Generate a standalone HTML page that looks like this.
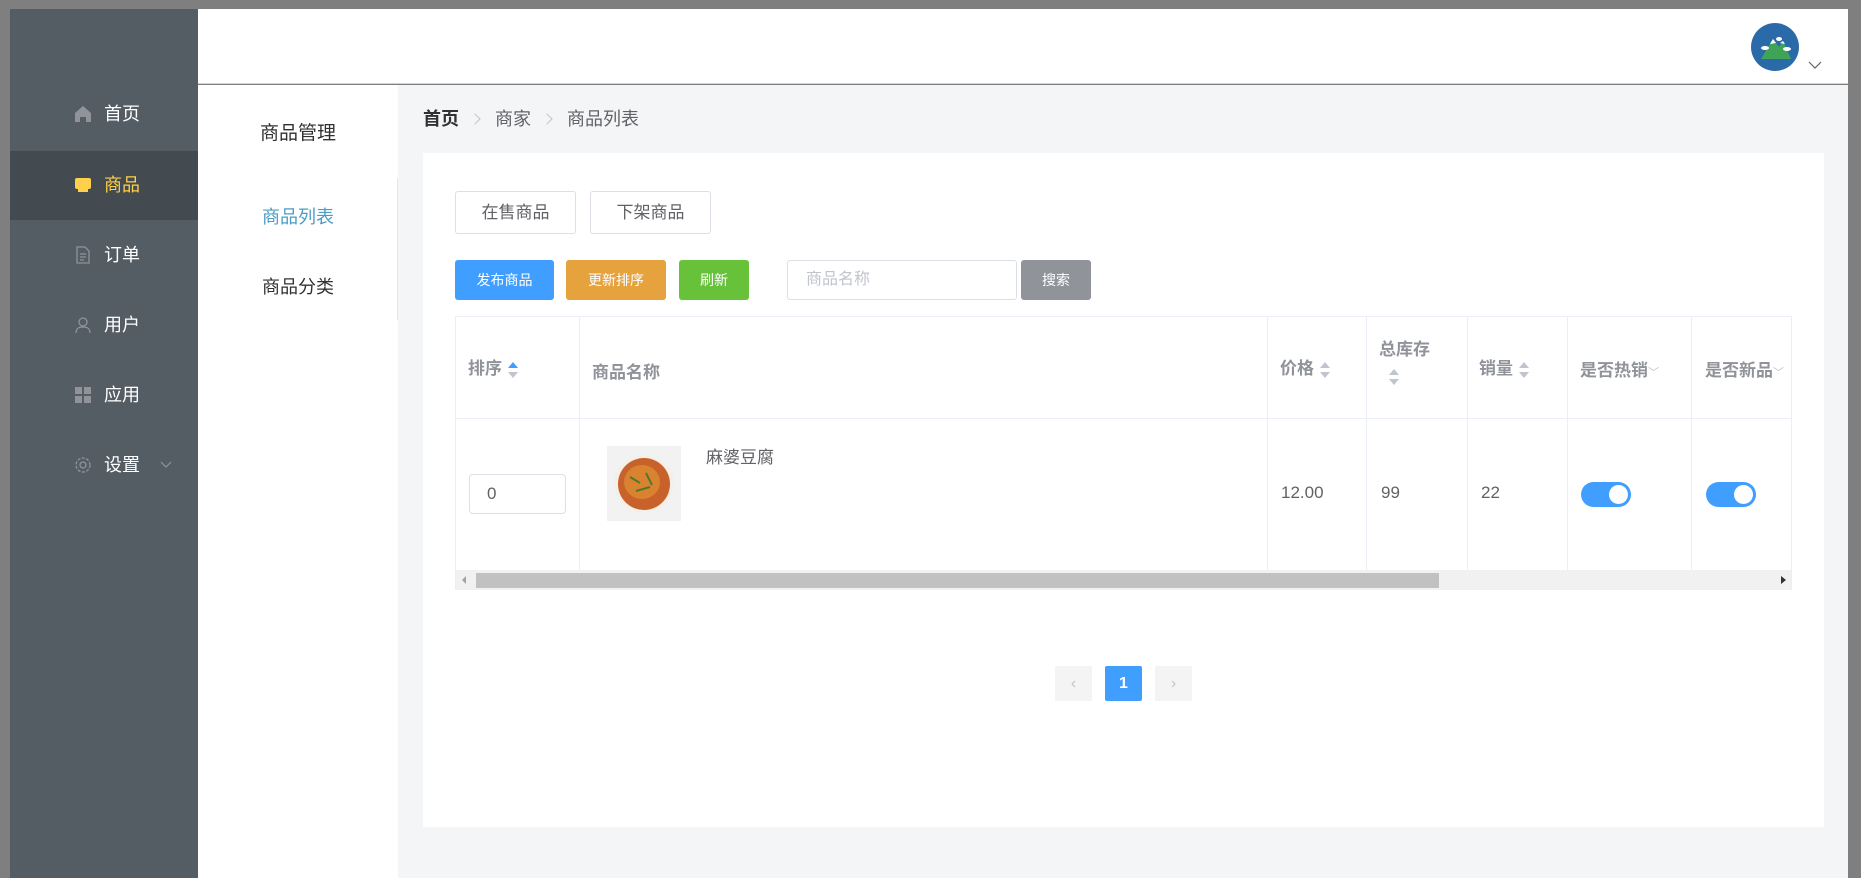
<!DOCTYPE html>
<html><head><meta charset="utf-8"><style>
*{margin:0;padding:0;box-sizing:border-box}
body{width:1861px;height:878px;background:#7f7f7f;position:relative;overflow:hidden;font-family:"Liberation Sans","Noto Sans CJK SC",sans-serif;color:#303133}
.a{position:absolute}
.side{left:10px;top:9px;width:188px;height:869px;background:#545c64}
.mi{position:absolute;left:0;width:188px;height:69px;color:#fff;font-size:18px;line-height:69px}
.mi span.t{position:absolute;left:94px}
.mi .ic{position:absolute;left:64px;top:25px;width:18px;height:18px}
.btn{position:absolute;color:#fff;font-size:14px;text-align:center;border-radius:3px}
.th{position:absolute;font-size:17px;font-weight:bold;color:#909399}
.vl{position:absolute;top:316px;height:254px;width:1px;background:#ebeef5}
.sort{display:inline-block;vertical-align:middle;margin-left:6px;width:10px;height:18px;position:relative}
.sort:before{content:"";position:absolute;left:0;top:1px;border:5px solid transparent;border-bottom:6px solid #c0c4cc;border-top:0}
.sort:after{content:"";position:absolute;left:0;top:11px;border:5px solid transparent;border-top:6px solid #c0c4cc;border-bottom:0}
.sort.up:before{border-bottom-color:#409eff}
.sw{position:absolute;top:482px;width:50px;height:25px;border-radius:13px;background:#409eff}
.sw:after{content:"";position:absolute;right:3px;top:3px;width:19px;height:19px;border-radius:50%;background:#fff}
.td{position:absolute;top:483px;font-size:17px;color:#606266}
.sep{display:inline-block;width:8px;height:8px;border-top:1px solid #c0c4cc;border-right:1px solid #c0c4cc;transform:rotate(45deg);margin:0 16px 2px 12px}
</style></head><body>
<div class="a side">
 <div class="mi" style="top:71px"><svg class="ic" viewBox="0 0 18 18"><path d="M1 8L9 1l8 7v9h-5v-5H6v5H1z" fill="#909399"/></svg><span class="t">首页</span></div>
 <div class="mi" style="top:142px;background:#434a50;color:#ffd04b"><svg class="ic" viewBox="0 0 18 18"><rect x="1" y="2" width="16" height="11" rx="2" fill="#ffd04b"/><rect x="4" y="13" width="10" height="3" fill="#ffd04b"/></svg><span class="t">商品</span></div>
 <div class="mi" style="top:212px"><svg class="ic" viewBox="0 0 18 18"><path d="M3 1h8l4 4v12H3z M6 8h6M6 11h6M6 14h4" fill="none" stroke="#909399" stroke-width="1.3"/></svg><span class="t">订单</span></div>
 <div class="mi" style="top:282px"><svg class="ic" viewBox="0 0 18 18"><circle cx="9" cy="6" r="4" fill="none" stroke="#909399" stroke-width="1.3"/><path d="M2 17c0-5 3-6 7-6s7 1 7 6" fill="none" stroke="#909399" stroke-width="1.3"/></svg><span class="t">用户</span></div>
 <div class="mi" style="top:352px"><svg class="ic" viewBox="0 0 18 18"><rect x="1" y="1" width="7" height="7" fill="#909399"/><rect x="10" y="1" width="7" height="7" fill="#909399"/><rect x="1" y="10" width="7" height="7" fill="#909399"/><rect x="10" y="10" width="7" height="7" fill="#909399"/></svg><span class="t">应用</span></div>
 <div class="mi" style="top:422px"><svg class="ic" viewBox="0 0 18 18"><circle cx="9" cy="9" r="7" fill="none" stroke="#909399" stroke-width="1.3" stroke-dasharray="3 1.5"/><circle cx="9" cy="9" r="3" fill="none" stroke="#909399" stroke-width="1.3"/></svg><span class="t">设置</span><svg class="a" style="left:150px;top:30px" width="12" height="8" viewBox="0 0 12 8"><path d="M1 1l5 5 5-5" fill="none" stroke="#909399" stroke-width="1.2"/></svg></div>
</div>
<div class="a" style="left:198px;top:9px;width:1650px;height:75px;background:#fff;border-bottom:1px solid #d0d3d8"></div>
<svg class="a" style="left:1751px;top:23px" width="48" height="48" viewBox="0 0 48 48"><circle cx="24" cy="24" r="24" fill="#2b6aa8"/><path d="M10 36L22 16l6 8 4-6 8 18z" fill="#3fa457"/><path d="M19 21l3-5 3 4z M29 20l3-2 2 3z" fill="#fff"/><ellipse cx="14" cy="25" rx="4" ry="2" fill="#fff"/><ellipse cx="36" cy="26" rx="4" ry="2" fill="#fff"/><ellipse cx="28" cy="16" rx="3" ry="2" fill="#fff"/></svg>
<svg class="a" style="left:1808px;top:61px" width="14" height="9" viewBox="0 0 14 9"><path d="M1 1l6 6 6-6" fill="none" stroke="#606266" stroke-width="1.2"/></svg>
<div class="a" style="left:198px;top:85px;width:200px;height:793px;background:#fff"></div>
<div class="a" style="left:397px;top:178px;width:1px;height:142px;background:#e6e6e6"></div>
<div class="a" style="left:198px;top:118px;width:200px;text-align:center;font-size:19px;color:#303133">商品管理</div>
<div class="a" style="left:198px;top:203px;width:200px;text-align:center;font-size:18px;color:#4a9cc6">商品列表</div>
<div class="a" style="left:198px;top:273px;width:200px;text-align:center;font-size:18px;color:#303133">商品分类</div>
<div class="a" style="left:398px;top:85px;width:1450px;height:793px;background:#f4f5f7"></div>
<div class="a" style="left:1848px;top:0;width:13px;height:878px;background:#7f7f7f"></div>
<div class="a" style="left:0;top:0;width:1861px;height:9px;background:#7f7f7f"></div>
<div class="a" style="left:423px;top:105px;font-size:18px;color:#606266"><b style="color:#303133">首页</b><span class="sep"></span>商家<span class="sep"></span>商品列表</div>
<div class="a" style="left:423px;top:153px;width:1401px;height:674px;background:#fff"></div>
<div class="btn" style="left:455px;top:191px;width:121px;height:43px;line-height:41px;border:1px solid #dcdfe6;color:#606266;font-size:17px;background:#fff">在售商品</div>
<div class="btn" style="left:590px;top:191px;width:121px;height:43px;line-height:41px;border:1px solid #dcdfe6;color:#606266;font-size:17px;background:#fff">下架商品</div>
<div class="btn" style="left:455px;top:260px;width:99px;height:40px;line-height:40px;background:#409eff">发布商品</div>
<div class="btn" style="left:566px;top:260px;width:100px;height:40px;line-height:40px;background:#e6a23c">更新排序</div>
<div class="btn" style="left:679px;top:260px;width:70px;height:40px;line-height:40px;background:#67c23a">刷新</div>
<div class="a" style="left:787px;top:260px;width:230px;height:40px;border:1px solid #dcdfe6;border-radius:3px;font-size:16px;color:#c0c4cc;line-height:38px;padding-left:18px">商品名称</div>
<div class="btn" style="left:1021px;top:260px;width:70px;height:40px;line-height:40px;background:#909399">搜索</div>
<div class="a" style="left:455px;top:316px;width:1337px;height:274px;border:1px solid #ebeef5"></div>
<div class="a" style="left:455px;top:418px;width:1337px;height:1px;background:#ebeef5"></div>
<div class="vl" style="left:579px"></div><div class="vl" style="left:1267px"></div><div class="vl" style="left:1366px"></div><div class="vl" style="left:1467px"></div><div class="vl" style="left:1567px"></div><div class="vl" style="left:1691px"></div>
<div class="th" style="left:468px;top:354px">排序<span class="sort up"></span></div>
<div class="th" style="left:592px;top:358px">商品名称</div>
<div class="th" style="left:1280px;top:354px">价格<span class="sort"></span></div>
<div class="th" style="left:1379px;top:335px">总库存<br><span class="sort" style="margin:8px 0 0 10px"></span></div>
<div class="th" style="left:1479px;top:354px">销量<span class="sort"></span></div>
<div class="th" style="left:1580px;top:356px">是否热销<span style="font-size:11px;font-weight:normal;color:#c0c4cc">﹀</span></div>
<div class="th" style="left:1705px;top:356px">是否新品<span style="font-size:11px;font-weight:normal;color:#c0c4cc">﹀</span></div>
<div class="a" style="left:469px;top:474px;width:97px;height:40px;border:1px solid #dcdfe6;border-radius:4px;font-size:17px;color:#606266;line-height:38px;padding-left:17px">0</div>
<div class="a" style="left:607px;top:446px;width:74px;height:75px;background:#f2f2f2"></div>
<svg class="a" style="left:612px;top:453px" width="64" height="62" viewBox="0 0 64 62"><ellipse cx="32" cy="31" rx="30" ry="29" fill="#f4efe8"/><ellipse cx="32" cy="31" rx="26" ry="26" fill="#c8622a"/><ellipse cx="30" cy="29" rx="18" ry="17" fill="#d9822f"/><path d="M18 24l10 6M34 20l6 12M24 38l14-4" stroke="#4f7a2a" stroke-width="2"/></svg>
<div class="a" style="left:706px;top:443px;font-size:17px;color:#606266">麻婆豆腐</div>
<div class="td" style="left:1281px">12.00</div>
<div class="td" style="left:1381px">99</div>
<div class="td" style="left:1481px">22</div>
<div class="sw" style="left:1581px"></div><div class="sw" style="left:1706px"></div>
<div class="a" style="left:456px;top:570px;width:1335px;height:20px;background:#f1f1f1"></div>
<div class="a" style="left:476px;top:573px;width:963px;height:15px;background:#c1c1c1"></div>
<div class="a" style="left:462px;top:576px;border:4px solid transparent;border-right:4px solid #a3a3a3;border-left:0"></div>
<div class="a" style="left:1781px;top:576px;border:4px solid transparent;border-left:5px solid #333;border-right:0"></div>
<div class="a" style="left:1055px;top:666px;width:37px;height:35px;background:#f4f4f5;color:#c0c4cc;text-align:center;line-height:35px;font-size:16px">&lsaquo;</div>
<div class="a" style="left:1105px;top:666px;width:37px;height:35px;background:#409eff;color:#fff;text-align:center;line-height:35px;font-size:16px;font-weight:bold;border-radius:2px">1</div>
<div class="a" style="left:1155px;top:666px;width:37px;height:35px;background:#f4f4f5;color:#c0c4cc;text-align:center;line-height:35px;font-size:16px">&rsaquo;</div>
</body></html>
